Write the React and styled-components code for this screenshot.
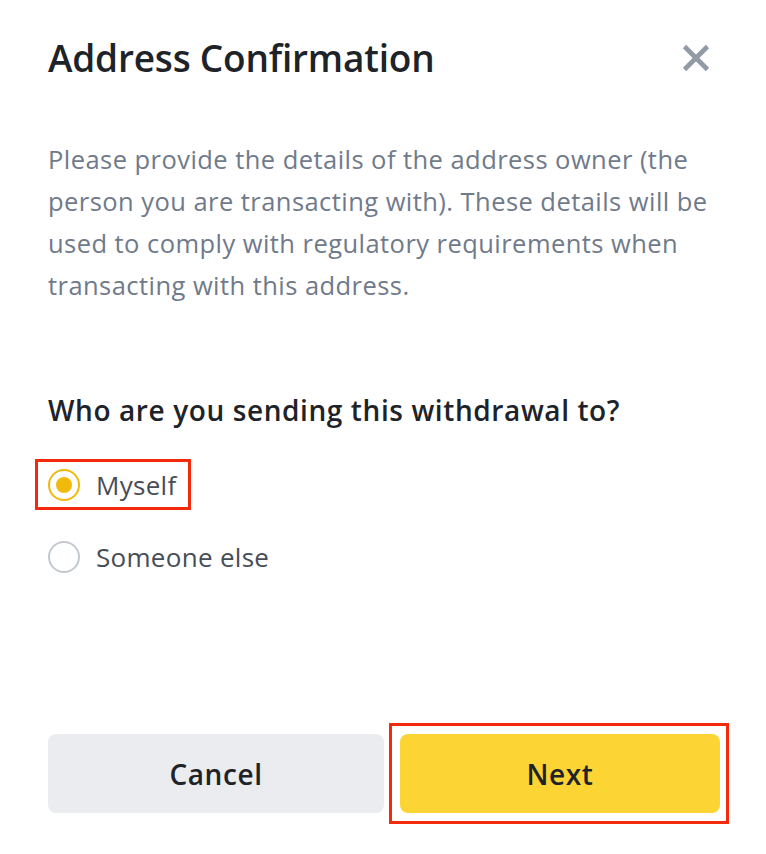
import React, { useState } from 'react';
import styled, { createGlobalStyle } from 'styled-components';

const GlobalStyle = createGlobalStyle`
  html, body {
    margin: 0;
    padding: 0;
    background: #fff;
  }
  body {
    font-family: "Open Sans", "Liberation Sans", Arial, sans-serif;
    color: #1e2329;
  }
`;

const Modal = styled.div`
  width: 766px;
  height: 854px;
  box-sizing: border-box;
  padding: 0 46px 0 48px;
  display: flex;
  flex-direction: column;
  background: #fff;
`;

const Header = styled.div`
  display: flex;
  align-items: center;
  justify-content: space-between;
  padding-top: 34px;
  height: 48px;
`;

const Title = styled.h2`
  margin: 0;
  font-size: 37px;
  font-weight: 600;
  line-height: 48px;
  letter-spacing: -0.2px;
  color: #1e2329;
`;

const CloseButton = styled.button`
  border: none;
  background: none;
  padding: 0;
  margin-right: 9px;
  width: 30px;
  height: 30px;
  cursor: pointer;
  display: flex;
`;

const Description = styled.p`
  margin: 56px 0 0;
  font-size: 25.5px;
  letter-spacing: 0.45px;
  line-height: 42px;
  color: #707a8a;
`;

const Question = styled.h3`
  margin: 84px 0 0;
  font-size: 28px;
  font-weight: 600;
  letter-spacing: 0.6px;
  line-height: 40px;
  color: #1e2329;
`;

const Options = styled.div`
  display: flex;
  flex-direction: column;
  align-items: flex-start;
  gap: 40px;
  margin-top: 39px;
`;

const Option = styled.label`
  display: flex;
  align-items: center;
  gap: 16px;
  cursor: pointer;
  font-size: 26px;
  letter-spacing: 0.3px;
  line-height: 32px;
  color: #474d57;
`;

const Highlight = styled.div`
  display: flex;
  border: 3px solid #f42a0c;
  padding: ${(p) => p.$pad};
  margin: ${(p) => p.$offset};
`;

const Radio = styled.span`
  width: 32px;
  height: 32px;
  box-sizing: border-box;
  border-radius: 50%;
  border: 2px solid ${(p) => (p.$checked ? '#f0b90b' : '#c4c9d0')};
  display: flex;
  align-items: center;
  justify-content: center;

  &::after {
    content: '';
    width: 16px;
    height: 16px;
    border-radius: 50%;
    background: #f0b90b;
    display: ${(p) => (p.$checked ? 'block' : 'none')};
  }
`;

const Footer = styled.div`
  display: flex;
  align-items: center;
  gap: 16px;
  margin-top: auto;
  margin-bottom: 41px;
`;

const Button = styled.button`
  height: 79px;
  width: ${(p) => p.$width}px;
  border: none;
  border-radius: 8px;
  font-family: inherit;
  font-size: 28px;
  font-weight: 600;
  letter-spacing: 0.6px;
  color: #1e2329;
  background: ${(p) => (p.$primary ? '#fcd535' : '#eaecef')};
  cursor: pointer;
`;

const CloseIcon = () => (
  <svg width="30" height="30" viewBox="0 0 30 30">
    <path d="M3.5 3.5 L26.5 26.5 M26.5 3.5 L3.5 26.5" stroke="#929aa5" strokeWidth="4.6" />
  </svg>
);

export default function App() {
  const [choice, setChoice] = useState('myself');

  return (
    <>
      <GlobalStyle />
      <Modal>
        <Header>
          <Title>Address Confirmation</Title>
          <CloseButton aria-label="Close">
            <CloseIcon />
          </CloseButton>
        </Header>
        <Description>
          Please provide the details of the address owner (the person you are
          transacting with). These details will be used to comply with
          regulatory requirements when transacting with this address.
        </Description>
        <Question>Who are you sending this withdrawal to?</Question>
        <Options>
          <Highlight $pad="7px 11px 6px 10px" $offset="-10px -14px -9px -13px">
            <Option onClick={() => setChoice('myself')}>
              <Radio $checked={choice === 'myself'} />
              Myself
            </Option>
          </Highlight>
          <Option onClick={() => setChoice('someone')}>
            <Radio $checked={choice === 'someone'} />
            Someone else
          </Option>
        </Options>
        <Footer>
          <Button $width={336}>Cancel</Button>
          <Highlight $pad="8px 6px 8px 8px" $offset="-11px -9px -11px -11px">
            <Button $width={320} $primary>
              Next
            </Button>
          </Highlight>
        </Footer>
      </Modal>
    </>
  );
}
